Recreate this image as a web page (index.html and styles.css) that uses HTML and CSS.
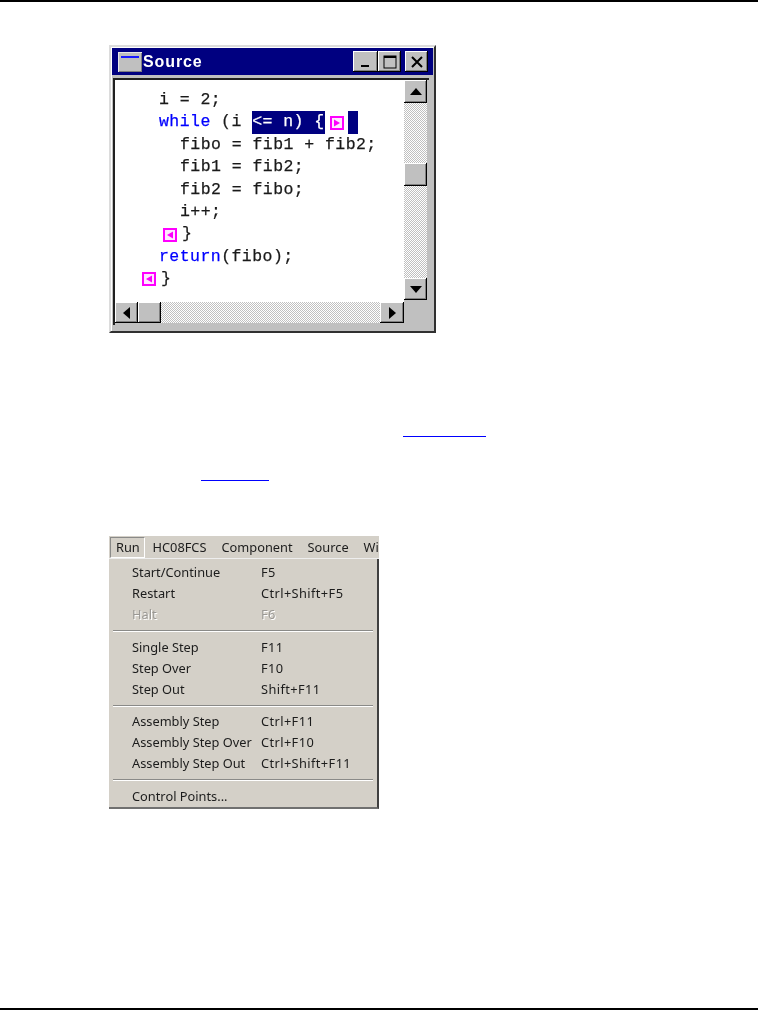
FILE: index.html
```html
<!DOCTYPE html>
<html lang="en">
<head>
<meta charset="utf-8">
<title>Source window and Run menu</title>
<link rel="stylesheet" href="styles.css">
</head>
<body>
<main class="page">
  <section class="window">
    <header class="titlebar">
      <svg class="sysicon" width="24" height="20" viewBox="0 0 24 20"><rect x="0.5" y="0.5" width="23" height="19" fill="#c0c0c0" stroke="#808080"/><rect x="0" y="0" width="24" height="1" fill="#e8e8e8"/><rect x="0" y="0" width="1" height="20" fill="#e8e8e8"/><rect x="3" y="4" width="18" height="2" fill="#1c1cff"/></svg>
      <span class="title">Source</span>
      <span class="caption-buttons">
        <span class="btn capbtn capmin"><svg width="12" height="12" viewBox="0 0 12 12"><rect x="1" y="9" width="8" height="2" fill="#000"/></svg></span>
        <span class="btn capbtn"><svg width="14" height="14" viewBox="0 0 14 14"><rect x="1" y="1" width="12" height="12" fill="none" stroke="#000"/><rect x="1" y="1" width="12" height="2" fill="#000"/></svg></span>
        <span class="btn capbtn capclose"><svg width="14" height="12" viewBox="0 0 14 12"><path d="M2 1l10 10M12 1L2 11" stroke="#000" stroke-width="2" fill="none"/></svg></span>
      </span>
    </header>
    <div class="client">
      <div class="code">
        <div class="ln in0">i = 2;</div>
        <div class="ln in0"><span class="kw">while</span> (i <span class="sel">&lt;= n) {</span><svg class="marker" width="14" height="14" viewBox="0 0 14 14"><rect x="1" y="1" width="12" height="12" fill="#ffe8ff" stroke="#ff00ff" stroke-width="2"/><path d="M4 3.5v7l6-3.5z" fill="#ff00ff"/></svg><span class="sel seltail"></span></div>
        <div class="ln in2">fibo = fib1 + fib2;</div>
        <div class="ln in2">fib1 = fib2;</div>
        <div class="ln in2">fib2 = fibo;</div>
        <div class="ln in2">i++;</div>
        <div class="ln in-mark1"><svg class="marker" width="14" height="14" viewBox="0 0 14 14"><rect x="1" y="1" width="12" height="12" fill="#ffe8ff" stroke="#ff00ff" stroke-width="2"/><path d="M10 3.5v7L4 7z" fill="#ff00ff"/></svg><span class="brace">}</span></div>
        <div class="ln in0"><span class="kw">return</span>(fibo);</div>
        <div class="ln in-mark2"><svg class="marker" width="14" height="14" viewBox="0 0 14 14"><rect x="1" y="1" width="12" height="12" fill="#ffe8ff" stroke="#ff00ff" stroke-width="2"/><path d="M10 3.5v7L4 7z" fill="#ff00ff"/></svg><span class="brace">}</span></div>
      </div>
      <div class="vscroll">
        <span class="btn sbtn"><svg width="12" height="8" viewBox="0 0 12 8"><path d="M6 0l6 7H0z" fill="#000"/></svg></span>
        <span class="track track-a"></span>
        <span class="btn sbtn"></span>
        <span class="track track-b"></span>
        <span class="btn sbtn"><svg width="12" height="8" viewBox="0 0 12 8"><path d="M0 1h12L6 8z" fill="#000"/></svg></span>
      </div>
      <div class="hscroll">
        <span class="btn hbtn"><svg width="8" height="12" viewBox="0 0 8 12"><path d="M7 0v12L0 6z" fill="#000"/></svg></span>
        <span class="btn hbtn"></span>
        <span class="track track-h"></span>
        <span class="btn hbtn"><svg width="8" height="12" viewBox="0 0 8 12"><path d="M1 0v12l7-6z" fill="#000"/></svg></span>
      </div>
      <div class="corner"></div>
    </div>
  </section>

  <p class="para para-one"><a class="xref xref-one" href="#"></a></p>
  <p class="para para-two"><a class="xref xref-two" href="#"></a></p>

  <section class="menushot">
    <nav class="menubar">
      <span class="menutop menutop-open">Run</span>
      <span class="menutop">HC08FCS</span>
      <span class="menutop">Component</span>
      <span class="menutop">Source</span>
      <span class="menutop">Window</span>
    </nav>
    <div class="dropdown">
      <div class="item"><span class="label">Start/Continue</span><span class="keys">F5</span></div>
      <div class="item"><span class="label">Restart</span><span class="keys">Ctrl+Shift+F5</span></div>
      <div class="item item-off"><span class="label">Halt</span><span class="keys">F6</span></div>
      <hr class="sep">
      <div class="item"><span class="label">Single Step</span><span class="keys">F11</span></div>
      <div class="item"><span class="label">Step Over</span><span class="keys">F10</span></div>
      <div class="item"><span class="label">Step Out</span><span class="keys">Shift+F11</span></div>
      <hr class="sep sep-tight">
      <div class="item"><span class="label">Assembly Step</span><span class="keys">Ctrl+F11</span></div>
      <div class="item"><span class="label">Assembly Step Over</span><span class="keys">Ctrl+F10</span></div>
      <div class="item"><span class="label">Assembly Step Out</span><span class="keys">Ctrl+Shift+F11</span></div>
      <hr class="sep">
      <div class="item"><span class="label">Control Points...</span></div>
    </div>
  </section>
</main>
</body>
</html>
```
FILE: styles.css
```css
* { box-sizing: border-box; }
html, body { margin: 0; padding: 0; background: #fff; }
.page {
  width: 758px;
  height: 1010px;
  border-top: 2px solid #000;
  border-bottom: 2px solid #000;
  padding: 43px 0 0 109px;
  overflow: hidden;
}

/* Source window */
.window {
  width: 327px;
  height: 288px;
  background: #c0c0c0;
  border-top: 2px solid #dcdcdc;
  border-left: 2px solid #dcdcdc;
  border-right: 2px solid #303030;
  border-bottom: 2px solid #303030;
  box-shadow: inset 1px 1px #fff;
  padding: 1px 1px 6px 1px;
  filter: blur(0.35px);
}
.titlebar {
  height: 27px;
  background: #000080;
  display: flex;
  align-items: center;
  padding: 0 5px 0 6px;
}
.sysicon { flex: none; }
.title {
  margin-left: 1px;
  color: #fff;
  font: bold 16px/1 "Liberation Sans", sans-serif;
  letter-spacing: 0.9px;
}
.caption-buttons { margin-left: auto; display: flex; }
.capbtn { width: 23px; height: 21px; }
.capmin { width: 25px; }
.capclose { margin-left: 4px; }
.btn {
  display: flex;
  align-items: center;
  justify-content: center;
  flex: none;
  background: #c0c0c0;
  box-shadow: inset -1px -1px #000, inset 1px 1px #fff, inset -2px -2px #808080;
}

.client {
  margin: 3px 1px 0 1px;
  height: 247px;
  display: grid;
  grid-template-columns: 289px 23px;
  grid-template-rows: 222px 21px;
  border-top: 2px solid #202020;
  border-left: 2px solid #202020;
  width: 316px;
}
.code {
  background: #fff;
  padding-top: 9px;
  font: 16.5px/22.4px "Liberation Mono", monospace;
  letter-spacing: 0.45px;
  -webkit-text-stroke: 0.25px currentColor;
  color: #1a1a1a;
  overflow: hidden;
}
.ln { display: flex; align-items: center; height: 22.4px; white-space: pre; }
.in0 { padding-left: 44px; }
.in2 { padding-left: 65px; }
.in-mark1 { padding-left: 48px; }
.in-mark2 { padding-left: 27px; }
.kw { color: #0000ff; }
.sel { background: #000080; color: #fff; height: 23px; display: inline-block; }
.seltail { width: 10px; margin-left: 4px; }
.marker { flex: none; margin-left: 5px; }
.in-mark1 .marker, .in-mark2 .marker { margin-left: 0; }
.brace { margin-left: 5px; }

.vscroll { display: flex; flex-direction: column; }
.sbtn { width: 23px; height: 23px; }
.vscroll .sbtn:last-child { height: 22px; }
.track {
  display: block;
  background-color: #fff;
  background-image: repeating-conic-gradient(#c0c0c0 0 25%, #fff 0 50%);
  background-size: 2px 2px;
}
.track-a { height: 60px; }
.track-b { height: 92px; }
.track-h { flex: 1; }
.hscroll { display: flex; }
.hbtn { width: 23px; height: 21px; }
.hbtn:last-child { width: 24px; }
.corner { background: #c0c0c0; }

/* Link lines */
.para { margin: 0; height: 0; }
.xref { display: block; background: #0000ff; height: 1px; }
.para-one { padding: 103px 0 0 294px; }
.xref-one { width: 83px; }
.para-two { padding: 44px 0 0 92px; }
.xref-two { width: 68px; }

/* Run menu */
.menushot {
  margin-top: 56px;
  width: 270px;
  height: 273px;
  font: 12.8px/1 "Noto Sans", sans-serif;
  color: #1c1c1c;
  filter: blur(0.3px);
  overflow: hidden;
}
.menubar {
  height: 23px;
  background: #d4d0c8;
  display: flex;
  align-items: center;
  white-space: nowrap;
  border-bottom: 1px solid #eee;
}
.menutop { padding: 0 7.5px; flex: none; }
.menutop-open {
  margin-left: 1px;
  height: 21px;
  width: 35px;
  line-height: 19px;
  padding: 0 0 0 5px;
  border: 1px solid;
  border-color: #8a8a88 #fff #fff #8a8a88;
}
.dropdown {
  height: 250px;
  padding-top: 3px;
  background: #d4d0c8;
  border-right: 2px solid #404040;
  border-bottom: 2px solid #707070;
}
.item {
  display: flex;
  height: 21px;
  align-items: center;
  padding-left: 23px;
}
.label { width: 129px; flex: none; }
.keys { letter-spacing: 0.4px; }
.item-off { color: #9a9894; text-shadow: 1px 1px #fff; }
.sep {
  margin: 5px 4px 5px 4px;
  height: 2px;
  border: 0;
  border-top: 1px solid #8a8a88;
  border-bottom: 1px solid #fff;
}
.sep-tight { margin-bottom: 4px; }
```
